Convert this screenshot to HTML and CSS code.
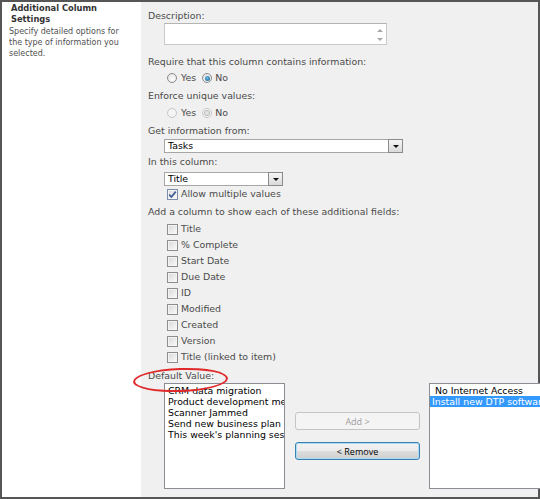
FILE: index.html
```html
<!DOCTYPE html>
<html lang="en">
<head>
    <meta charset="UTF-8">
    <title>Additional Column Settings</title>
    <link rel="stylesheet" href="styles.css">
</head>
<body>
    <div class="frame">
        <div class="side">
            <h3>Additional Column Settings</h3>
            <p>Specify detailed options for the type of information you selected.</p>
        </div>

        <div class="panel">
            <div class="label first">Description:</div>
            <div class="textbox">
                <span class="scroll"><i class="up"></i><i class="down"></i></span>
            </div>

            <div class="label require">Require that this column contains information:</div>
            <div class="options">
                <span class="radio"></span><span class="opt">Yes</span>
                <span class="radio second on"></span><span class="opt">No</span>
            </div>

            <div class="label">Enforce unique values:</div>
            <div class="options row2">
                <span class="radio off"></span><span class="opt">Yes</span>
                <span class="radio second off on"></span><span class="opt">No</span>
            </div>

            <div class="label">Get information from:</div>
            <div class="select wide">
                <span class="value">Tasks</span>
                <span class="drop"><i></i></span>
            </div>

            <div class="label column">In this column:</div>
            <div class="select narrow">
                <span class="value">Title</span>
                <span class="drop"><i></i></span>
            </div>
            <div class="check-row allow">
                <span class="checkbox checked">
                    <svg width="9" height="9" viewBox="0 0 9 9"><path d="M1.2 4.6 L3.4 7 L7.8 1.6" fill="none" stroke="#3e5a99" stroke-width="1.7"/></svg>
                </span>
                <span>Allow multiple values</span>
            </div>

            <div class="label">Add a column to show each of these additional fields:</div>
            <div class="fields">
                <div class="check-row"><span class="checkbox"></span><span>Title</span></div>
                <div class="check-row"><span class="checkbox"></span><span>% Complete</span></div>
                <div class="check-row"><span class="checkbox"></span><span>Start Date</span></div>
                <div class="check-row"><span class="checkbox"></span><span>Due Date</span></div>
                <div class="check-row"><span class="checkbox"></span><span>ID</span></div>
                <div class="check-row"><span class="checkbox"></span><span>Modified</span></div>
                <div class="check-row"><span class="checkbox"></span><span>Created</span></div>
                <div class="check-row"><span class="checkbox"></span><span>Version</span></div>
                <div class="check-row"><span class="checkbox"></span><span>Title (linked to item)</span></div>
            </div>

            <div class="label default">Default Value:<span class="ellipse"></span></div>
            <div class="picker">
                <div class="listbox">
                    <div>CRM data migration</div>
                    <div>Product development meeting</div>
                    <div>Scanner Jammed</div>
                    <div>Send new business plan</div>
                    <div>This week's planning session</div>
                </div>
                <div class="buttons">
                    <div class="btn disabled">Add &gt;</div>
                    <div class="btn focus">&lt; Remove</div>
                </div>
                <div class="listbox chosen">
                    <div>&nbsp;No Internet Access</div>
                    <div class="selected">Install new DTP software</div>
                </div>
            </div>
        </div>
    </div>
</body>
</html>
```

FILE: styles.css
```css
html, body {
    margin: 0;
    overflow: hidden;
}
body {
    font-family: "DejaVu Sans", Verdana, sans-serif;
    background-color: #f0f0f0;
}
.frame {
    display: flex;
    width: 540px;
    height: 499px;
    box-sizing: border-box;
    border: 2px solid #565656;
}
.side {
    flex: none;
    width: 139px;
    box-sizing: border-box;
    padding: 1px 10px 0 7px;
    background-color: #fff;
}
.side h3 {
    margin: 0;
    padding-left: 2px;
    font-size: 8.3px;
    line-height: 11px;
    font-weight: bold;
    color: #333;
}
.side p {
    margin: 1px 0 0;
    font-size: 8px;
    line-height: 11px;
    color: #505050;
}
.panel {
    flex: 1;
    min-width: 0;
    padding: 7px 0 0 7px;
    background-color: #f0f0f0;
    font-size: 9.4px;
    color: #4a4a4a;
}
.label {
    line-height: 14px;
    margin-top: 4px;
    white-space: nowrap;
}
.label.first {
    margin-top: 0;
}
.label.require {
    margin-top: 10px;
}
.label.column {
    margin-top: 2px;
}
.textbox {
    display: flex;
    justify-content: flex-end;
    width: 223px;
    height: 22px;
    margin-left: 16px;
    box-sizing: border-box;
    border: 1px solid #c9c9c9;
    border-top-color: #b4b4b4;
    background-color: #fff;
}
.scroll {
    display: flex;
    flex-direction: column;
    justify-content: space-between;
    align-items: center;
    width: 13px;
    padding: 5px 0 3px;
}
.scroll i {
    width: 0;
    height: 0;
    border-left: 3px solid transparent;
    border-right: 3px solid transparent;
}
.scroll .up {
    border-bottom: 3px solid #a8a8a8;
}
.scroll .down {
    border-top: 3px solid #a8a8a8;
}
.options {
    display: flex;
    align-items: center;
    height: 14px;
    margin: 2px 0 0 16px;
    line-height: 14px;
}
.options.row2 {
    margin-top: 3px;
}
.radio {
    position: relative;
    width: 10px;
    height: 10px;
    margin: 0 4px 0 3px;
    box-sizing: border-box;
    border: 1px solid #8b8b8b;
    border-radius: 50%;
    background: radial-gradient(circle at 60% 65%, #ffffff, #dcdcdc);
}
.radio.second {
    margin: 0 3px 0 6px;
}
.radio.on::after {
    content: "";
    position: absolute;
    left: 1.5px;
    top: 1.5px;
    width: 5px;
    height: 5px;
    border-radius: 50%;
    background: radial-gradient(circle at 45% 40%, #6fc7ef, #1c5f8e 80%);
}
.radio.off {
    border-color: #c6c6c6;
    background: #f4f4f4;
}
.radio.off.on::after {
    left: 1px;
    top: 1px;
    width: 6px;
    height: 6px;
    box-sizing: border-box;
    border: 1.5px solid #b9b9b9;
    background: #e4e4e4;
}
.select {
    display: flex;
    align-items: stretch;
    height: 14px;
    margin: 1px 0 0 16px;
    box-sizing: border-box;
    border: 1px solid #a6a6a6;
    background-color: #fff;
    color: #000;
}
.select.wide {
    width: 239px;
}
.select.narrow {
    width: 119px;
    margin-top: 3px;
}
.select .value {
    flex: 1;
    padding-left: 3px;
    line-height: 12px;
}
.drop {
    display: flex;
    align-items: center;
    justify-content: center;
    width: 13px;
    border: 1px solid #8a8a8a;
    margin: -1px -1px -1px 0;
    background: linear-gradient(#f6f6f6, #dadada);
}
.drop i {
    width: 0;
    height: 0;
    border-left: 3px solid transparent;
    border-right: 3px solid transparent;
    border-top: 3px solid #111;
}
.check-row {
    display: flex;
    align-items: center;
    height: 16px;
    margin-left: 16px;
    line-height: 16px;
}
.check-row.allow {
    height: 14px;
    margin-top: 1px;
    line-height: 14px;
}
.fields {
    margin-top: 2px;
}
.checkbox {
    display: flex;
    align-items: center;
    justify-content: center;
    width: 11px;
    height: 11px;
    margin: 0 3px 0 3px;
    box-sizing: border-box;
    border: 1px solid #8e8e8e;
    background: linear-gradient(135deg, #d8d8d8, #fbfbfb);
    box-shadow: inset 0 0 0 1px #f4f4f4;
}
.checkbox.checked {
    border-color: #7d8ca8;
}
.label.default {
    position: relative;
    margin-top: 4px;
}
.ellipse {
    position: absolute;
    left: -15px;
    top: -1px;
    width: 95px;
    height: 24px;
    box-sizing: border-box;
    border: 2px solid #e02a2a;
    border-radius: 50%;
    transform: rotate(-2deg);
}
.picker {
    display: flex;
    margin-left: 16px;
}
.listbox {
    flex: none;
    width: 121px;
    height: 106px;
    box-sizing: border-box;
    padding: 1px 3px;
    border: 1px solid #8a8d93;
    background-color: #fff;
    color: #000;
    font-size: 9.4px;
    line-height: 11px;
    white-space: nowrap;
    overflow: hidden;
}
.listbox.chosen {
    width: 125px;
    padding: 1px 0;
}
.listbox.chosen div {
    padding-left: 2px;
}
.listbox .selected {
    background-color: #3399ff;
    color: #fff;
}
.buttons {
    flex: none;
    display: flex;
    flex-direction: column;
    gap: 12px;
    width: 125px;
    margin: 0 9px 0 10px;
    padding-top: 29px;
}
.btn {
    display: flex;
    align-items: center;
    justify-content: center;
    height: 18px;
    box-sizing: border-box;
    border-radius: 3px;
    font-family: "Open Sans", sans-serif;
    font-size: 9px;
}
.btn.disabled {
    border: 1px solid #c2c4c6;
    background-color: #f4f4f4;
    color: #9c9c9c;
}
.btn.focus {
    border: 1px solid #3c7fb1;
    background: linear-gradient(#f3f3f3, #ebebeb 50%, #dddddd 51%, #cfcfcf);
    box-shadow: inset 0 0 0 1px #a9dcf5;
    color: #000;
}
```
